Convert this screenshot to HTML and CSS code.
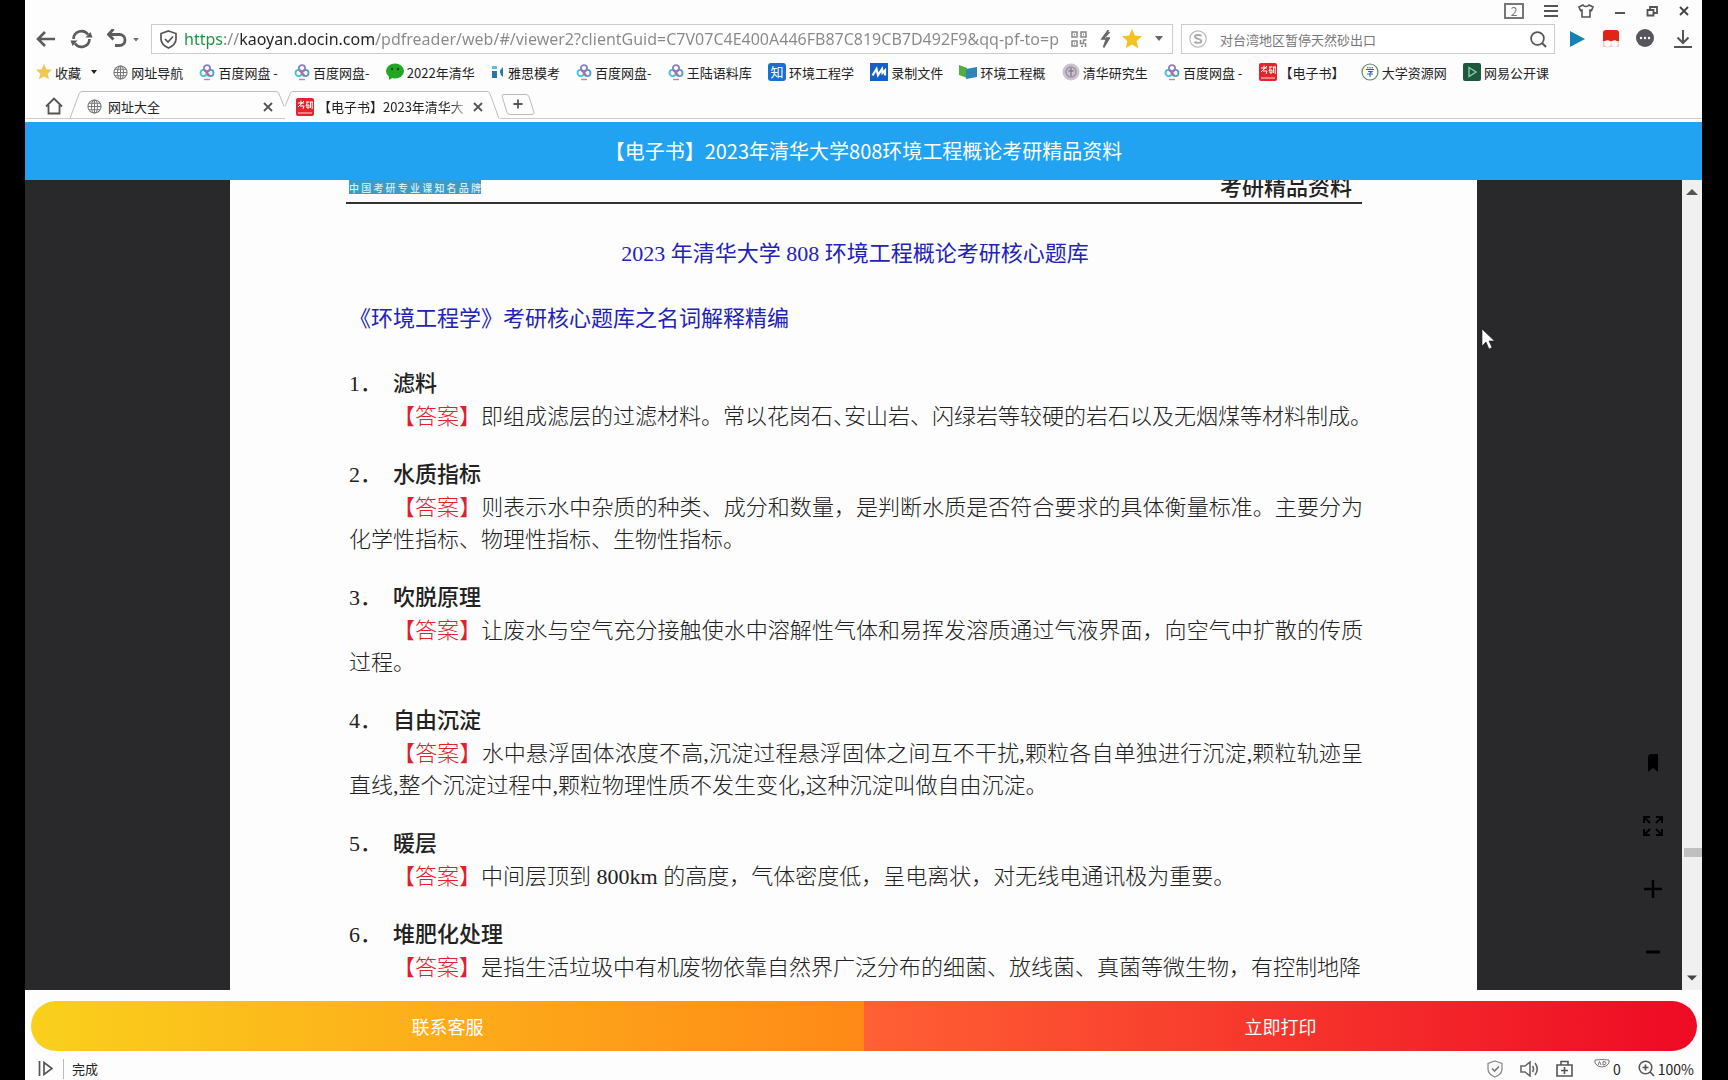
FILE: index.html
```html
<!DOCTYPE html>
<html lang="zh-CN">
<head>
<meta charset="utf-8">
<title>【电子书】2023年清华大学808环境工程概论考研精品资料</title>
<link rel="stylesheet" href="styles.css">
</head>
<body>
<svg class="defs" aria-hidden="true">
  <symbol id="globe" viewBox="0 0 16 16"><g fill="none" stroke="#777" stroke-width="1.1"><circle cx="8" cy="8" r="7"/><ellipse cx="8" cy="8" rx="3.2" ry="7"/><path d="M8 1v14M1 8h14M2.200 4.600h11.600M2.200 11.400h11.600"/></g></symbol>
  <symbol id="pan" viewBox="0 0 16 18"><g fill="none" stroke-width="1.800"><circle cx="4.600" cy="10" r="3.100" stroke="#3cbfe0"/><circle cx="11.400" cy="10" r="3.100" stroke="#4a9fc8"/><circle cx="8" cy="5.200" r="3.100" stroke="#8a7fc0"/><path d="M5.500 7.300 10.500 12.500" stroke="#e2588c"/></g><path d="M5 16.500h6" stroke="#999" stroke-width="1.400"/></symbol>
  <symbol id="ky" viewBox="0 0 18 18"><rect width="18" height="18" rx="2" fill="#e4232b"/><path d="M2 5h6M5 2.500v4M8 3 2 9M4 8h4l-1 3M10 4h3M11.500 4l-1.500 4M11 7h2v3h-2zM13.500 4H17M14.500 4v6M16.200 4v7" stroke="#fff" stroke-width="1" fill="none"/><path d="M2 15h14" stroke="#f6a0a0" stroke-width="1.500"/></symbol>
</svg>
<div class="window">
  <header class="chrome">
    <div class="titlebar">
      <button class="ic count" aria-label="窗口数">2</button>
      <button class="ic" aria-label="菜单"><svg width="14" height="14" viewBox="0 0 14 14"><path d="M0 2h14M0 7h14M0 12h14" stroke="#555" stroke-width="1.800"/></svg></button>
      <button class="ic" aria-label="皮肤"><svg width="16" height="14" viewBox="0 0 16 14"><path d="M5 1 1 3l1.500 3.500L4 6v7h8V6l1.500.5L15 3l-4-2c-1 2-5 2-6 0z" fill="none" stroke="#555" stroke-width="1.600"/></svg></button>
      <button class="ic" aria-label="最小化"><svg width="12" height="14" viewBox="0 0 12 14"><path d="M1 9h10" stroke="#555" stroke-width="2"/></svg></button>
      <button class="ic" aria-label="还原"><svg width="12" height="14" viewBox="0 0 12 14"><path d="M1.500 6h6v5.500h-6zM4 6V3h7v6H8" fill="none" stroke="#555" stroke-width="1.800"/></svg></button>
      <button class="ic" aria-label="关闭"><svg width="12" height="14" viewBox="0 0 12 14"><path d="M2 3l8 8M10 3l-8 8" stroke="#444" stroke-width="1.900"/></svg></button>
    </div>
    <div class="toolbar">
      <div class="nav">
        <button class="ic" aria-label="后退"><svg width="20" height="18" viewBox="0 0 20 18"><path d="M19 9H2M9 2 2 9l7 7" fill="none" stroke="#5c5c5c" stroke-width="2.600"/></svg></button>
        <button class="ic" aria-label="刷新"><svg width="23" height="20" viewBox="0 0 23 20"><path d="M3.500 10a8 8 0 0 1 14.500-4.500M19.500 10A8 8 0 0 1 5 14.500" fill="none" stroke="#5c5c5c" stroke-width="2.600"/><path d="M22.500 8.500h-7l5-5.500zM.5 11.500h7l-5 5.500z" fill="#5c5c5c"/></svg></button>
        <button class="ic" aria-label="恢复"><svg width="34" height="20" viewBox="0 0 34 20"><path d="M2 5.500h10.500a5.500 5.500 0 0 1 0 11H8M6.500 0 1.500 5.500l5 5" fill="none" stroke="#5c5c5c" stroke-width="2.800"/><path d="M26 9h6l-3 3.500z" fill="#777"/></svg></button>
      </div>
      <div class="address">
        <svg width="17" height="19" viewBox="0 0 17 19"><path d="M8.500 1 16 3.500V9c0 4.500-3 7-7.500 9C4 16 1 13.500 1 9V3.500z" fill="none" stroke="#555" stroke-width="1.700"/><path d="M5 9l3 3 5-5.500" fill="none" stroke="#555" stroke-width="1.700"/></svg>
        <input class="url" type="text" aria-label="地址" value="https://kaoyan.docin.com/pdfreader/web/#/viewer2?clientGuid=C7V07C4E400A446FB87C819CB7D492F9&amp;qq-pf-to=p">
        <svg width="16" height="16" viewBox="0 0 16 16"><path d="M1 1h5v5H1zM10 1h5v5h-5zM1 10h5v5H1zM9.500 9v3.500h3V9h3M10 15.200h2M14.500 12v4M3 3.500h1M12 3.500h1M3 12.500h1" fill="none" stroke="#888" stroke-width="1.500"/></svg>
        <svg class="bolt" width="12" height="18" viewBox="0 0 12 18"><path d="M8.500 0 2 9l4.500 0L3.500 17.500M9.500 2 3 9M9.500 7.500 3.500 17.500M6 8.200h4" fill="none" stroke="#666" stroke-width="1.700"/></svg>
        <svg width="20" height="20" viewBox="0 0 20 20"><path d="M10 0l2.900 6.600 7.100.7-5.300 4.800 1.500 7.100L10 15.500l-6.200 3.700 1.500-7.100L0 7.300l7.100-.7z" fill="#f4c320"/></svg>
        <svg class="drop" width="10" height="6" viewBox="0 0 10 6"><path d="M1 0h8L5 5z" fill="#666"/></svg>
      </div>
      <div class="search">
        <svg width="18" height="18" viewBox="0 0 18 18"><circle cx="9" cy="9" r="8.200" fill="none" stroke="#bbb" stroke-width="1.200"/><path d="M12.500 5.800c-2-1.300-6.500-1.200-6.500 1 0 2.500 6.300 1.500 6.300 4.200 0 2.400-4.800 2.300-6.800.9" fill="none" stroke="#aaa" stroke-width="1.900"/></svg>
        <input class="query" type="text" aria-label="搜索" placeholder="对台湾地区暂停天然砂出口">
        <svg width="17" height="17" viewBox="0 0 17 17"><circle cx="7.500" cy="7.500" r="6.400" fill="none" stroke="#555" stroke-width="1.700"/><path d="M12 12l4 4" stroke="#555" stroke-width="2"/></svg>
      </div>
      <div class="extras">
        <button class="ic" aria-label="播放"><svg width="17" height="18" viewBox="0 0 17 18"><path d="M1 1l15 8-15 8z" fill="#1482b4"/></svg></button>
        <button class="ic" aria-label="扩展"><svg width="18" height="18" viewBox="0 0 18 18"><rect x="1" width="16" height="17" rx="3" fill="#e02416"/><path d="M1 11h16v6H1z" fill="#f7c8c4"/><circle cx="5.500" cy="13.500" r="3.200" fill="#fff"/><circle cx="12.500" cy="13.500" r="3.200" fill="#fff"/></svg></button>
        <button class="ic" aria-label="更多"><svg width="18" height="20" viewBox="0 0 18 20"><circle cx="9" cy="9" r="9" fill="#56575c"/><g fill="#fff"><circle cx="5" cy="9" r="1.200"/><circle cx="9" cy="9" r="1.200"/><circle cx="13" cy="9" r="1.200"/></g></svg></button>
        <button class="ic download" aria-label="下载"><svg width="18" height="18" viewBox="0 0 18 18"><path d="M9 0v13M3.500 7.500 9 13l5.500-5.500M0 17h18" fill="none" stroke="#555" stroke-width="2"/></svg></button>
      </div>
    </div>
    <nav class="bookmarks">
      <a href="#"><svg width="16" height="16" viewBox="0 0 20 20"><path d="M10 0l2.900 6.600 7.100.7-5.300 4.800 1.500 7.100L10 15.500l-6.200 3.700 1.500-7.100L0 7.300l7.100-.7z" fill="#f0c850"/></svg>收藏<svg class="caret" width="6" height="6" viewBox="0 0 6 6"><path d="M0 1h6L3 5z" fill="#222"/></svg></a>
      <a href="#"><svg width="15" height="15"><use href="#globe"/></svg>网址导航</a>
      <a href="#"><svg width="16" height="18"><use href="#pan"/></svg>百度网盘 -</a>
      <a href="#"><svg width="16" height="18"><use href="#pan"/></svg>百度网盘-</a>
      <a href="#"><svg width="18" height="18" viewBox="0 0 18 18"><ellipse cx="9" cy="8" rx="9" ry="7.500" fill="#22a722"/><path d="M3 12v5l5-3z" fill="#22a722"/><circle cx="6" cy="6" r="1.200" fill="#0c4d0c"/><circle cx="12" cy="6" r="1.200" fill="#0c4d0c"/></svg>2022年清华</a>
      <a href="#"><svg width="14" height="16" viewBox="0 0 14 16"><path d="M1 2h5v3H1z" fill="#5bbbe0"/><path d="M1 7h5v7H1z" fill="#2477a8"/><path d="M12 3q-6 5 0 10z" fill="#2477a8"/></svg>雅思模考</a>
      <a href="#"><svg width="16" height="18"><use href="#pan"/></svg>百度网盘-</a>
      <a href="#"><svg width="16" height="18"><use href="#pan"/></svg>王陆语料库</a>
      <a href="#"><span class="zhi">知</span>环境工程学</a>
      <a href="#"><svg width="18" height="18" viewBox="0 0 18 18"><rect width="18" height="18" fill="#1260c8"/><path d="M2.500 12.500 6.500 6l1.500 6 4-6 .5 4 2.500-2.500v5" fill="none" stroke="#fff" stroke-width="2.200"/></svg>录制文件</a>
      <a href="#"><svg width="18" height="16" viewBox="0 0 18 16"><path d="M0 1l8 3v10l-8-3z" fill="#51ad3c"/><path d="M7 5l11-2v10L7 15z" fill="#2f86b4"/></svg>环境工程概</a>
      <a href="#"><svg width="18" height="18" viewBox="0 0 18 18"><circle cx="9" cy="9" r="8.500" fill="#c9c2cd"/><circle cx="9" cy="9" r="5" fill="none" stroke="#9d91a4" stroke-width="1.500"/><path d="M9 5v8M6.500 8h5" stroke="#85778f" stroke-width="1.300"/></svg>清华研究生</a>
      <a href="#"><svg width="16" height="18"><use href="#pan"/></svg>百度网盘 -</a>
      <a href="#"><svg width="18" height="18"><use href="#ky"/></svg>【电子书】</a>
      <a href="#"><svg width="18" height="18" viewBox="0 0 18 18"><circle cx="9" cy="9" r="8" fill="#fff" stroke="#4f8f68" stroke-width="1.200"/><path d="M5 6.500h8M6.500 4l.7 1.500M9 4v1.500M11.500 4l-.7 1.500M7 8.500h4L9 10v4M6 11h6" fill="none" stroke="#3566b8" stroke-width="1.100"/></svg>大学资源网</a>
      <a href="#"><svg width="18" height="18" viewBox="0 0 18 18"><rect width="18" height="18" rx="2" fill="#20583f"/><path d="M6 4.500l7 4.500-7 4.500z" fill="none" stroke="#8fd0a8" stroke-width="1.300"/></svg>网易公开课</a>
    </nav>
    <div class="tabs">
      <button class="ic home" aria-label="主页"><svg width="18" height="18" viewBox="0 0 18 18"><path d="M1 9.500 9 1.500l8 8M3.500 8v8.500h11V8" fill="none" stroke="#555" stroke-width="1.800"/></svg></button>
      <div class="tab">
        <svg class="shape" viewBox="0 0 216 29" preserveAspectRatio="none"><path d="M0 28.500 9 3q1-2.500 3-2.500H207q2 0 3 2.500l5 13" /></svg>
        <svg width="15" height="15"><use href="#globe"/></svg>
        <span class="label">网址大全</span>
        <button class="ic" aria-label="关闭标签"><svg width="10" height="10" viewBox="0 0 10 10"><path d="M1 1l8 8M9 1 1 9" stroke="#555" stroke-width="1.800"/></svg></button>
      </div>
      <div class="tab active">
        <svg class="shape" viewBox="0 0 216 29" preserveAspectRatio="none"><path d="M0 16 5 3q1-2.500 3-2.500H203q2 0 3 2.500l9 25.500"/></svg>
        <svg width="18" height="18"><use href="#ky"/></svg>
        <span class="label">【电子书】2023年清华大</span>
        <button class="ic" aria-label="关闭标签"><svg width="10" height="10" viewBox="0 0 10 10"><path d="M1 1l8 8M9 1 1 9" stroke="#555" stroke-width="1.800"/></svg></button>
      </div>
      <button class="ic plus" aria-label="新建标签"><svg width="34" height="21" viewBox="0 0 34 21"><path d="M1 2q0-1.500 2-1.500h22q2 0 3 2l5 16q0 2-2 2H9q-2 0-3-2z" fill="none" stroke="#bbb"/><path d="M17 5.500v9M12.500 10h9" stroke="#555" stroke-width="1.800"/></svg></button>
    </div>
  </header>

  <h1 class="banner">【电子书】2023年清华大学808环境工程概论考研精品资料</h1>

  <main class="viewer">
    <article class="page">
      <div class="pagehead"><span class="brand">中国考研专业课知名品牌</span><span class="headtext">考研精品资料</span></div>
      <h2 class="doctitle">2023 年清华大学 808 环境工程概论考研核心题库</h2>
      <h3 class="subtitle">《环境工程学》考研核心题库之名词解释精编</h3>
      <section class="item"><h4><span>1．</span>滤料</h4><p><b>【答案】</b>即组成滤层的过滤材料。常以花岗石<span class="half">、</span>安山岩、闪绿岩等较硬的岩石以及无烟煤等材料制成<span class="half">。</span></p></section>
      <section class="item"><h4><span>2．</span>水质指标</h4><p><b>【答案】</b>则表示水中杂质的种类、成分和数量，是判断水质是否符合要求的具体衡量标准。主要分为化学性指标、物理性指标、生物性指标。</p></section>
      <section class="item"><h4><span>3．</span>吹脱原理</h4><p><b>【答案】</b>让废水与空气充分接触使水中溶解性气体和易挥发溶质通过气液界面，向空气中扩散的传质过程。</p></section>
      <section class="item"><h4><span>4．</span>自由沉淀</h4><p><b>【答案】</b>水中悬浮固体浓度不高,沉淀过程悬浮固体之间互不干扰,颗粒各自单独进行沉淀,颗粒轨迹呈直线,整个沉淀过程中,颗粒物理性质不发生变化,这种沉淀叫做自由沉淀。</p></section>
      <section class="item"><h4><span>5．</span>暖层</h4><p><b>【答案】</b>中间层顶到 800km 的高度，气体密度低，呈电离状，对无线电通讯极为重要。</p></section>
      <section class="item"><h4><span>6．</span>堆肥化处理</h4><p><b>【答案】</b>是指生活垃圾中有机废物依靠自然界广泛分布的细菌、放线菌、真菌等微生物，有控制地降</p></section>
    </article>
    <div class="scrollbar">
      <svg width="12" height="6" viewBox="0 0 12 6"><path d="M0 6 6 0l6 6z" fill="#555"/></svg>
      <div class="track"><div class="thumb"></div></div>
      <svg width="10" height="6" viewBox="0 0 12 6"><path d="M0 0h12L6 6z" fill="#444"/></svg>
    </div>
    <div class="float">
      <button class="ic" aria-label="书签"><svg width="12" height="20" viewBox="0 0 12 20"><path d="M1 3l2-2h8v18l-5-4-5 4z"/></svg></button>
      <button class="ic" aria-label="全屏"><svg width="20" height="20" viewBox="0 0 20 20"><path d="M1 7V1h6M1 1l6 6M13 1h6v6M19 1l-6 6M1 13v6h6M1 19l6-6M13 19h6v-6M19 19l-6-6" fill="none" stroke="#000" stroke-width="2"/></svg></button>
      <button class="ic" aria-label="放大"><svg width="18" height="18" viewBox="0 0 18 18"><path d="M9 0v18M0 9h18" stroke="#000" stroke-width="2.400"/></svg></button>
      <button class="ic" aria-label="缩小"><svg width="16" height="18" viewBox="0 0 16 18"><path d="M1 9h14" stroke="#000" stroke-width="3"/></svg></button>
    </div>
    <svg class="cursor" width="14" height="22" viewBox="0 0 14 22"><path d="M1 1v17l4-4 3 7 3-1.500-3-6.500h5.500z" fill="#fff" stroke="#222" stroke-width=".6"/></svg>
  </main>

  <div class="actions">
    <button class="service">联系客服</button>
    <button class="print">立即打印</button>
  </div>

  <footer class="status">
    <button class="ic" aria-label="侧栏"><svg width="15" height="15" viewBox="0 0 15 15"><path d="M1.500 0v15M6 1.500v12l8-6z" fill="none" stroke="#555" stroke-width="1.700"/></svg></button>
    <span class="done">完成</span>
    <svg width="16" height="18" viewBox="0 0 16 18"><path d="M8 1l7 2.500V9c0 4-3 6.500-7 8-4-1.500-7-4-7-8V3.500z" fill="none" stroke="#888" stroke-width="1.200"/><path d="M5 8.500l2.500 2.500L12 6.500" fill="none" stroke="#777" stroke-width="1.600"/></svg>
    <svg width="19" height="16" viewBox="0 0 19 16"><path d="M1 5h4l5-4v14l-5-4H1zM12.500 5q2 3 0 6M15 2q4.500 6 0 12" fill="none" stroke="#666" stroke-width="1.600"/></svg>
    <svg width="17" height="17" viewBox="0 0 17 17"><path d="M1 5h15v11H1zM5 5V1.500h7V5M8.500 7v7M5 10.500h7" fill="none" stroke="#555" stroke-width="1.600"/></svg>
    <span class="ads"><svg width="16" height="9" viewBox="0 0 16 9"><path d="M1 1q7-1 14 0v3q-2 4-7 4T1 4zM4 6l1.500-3.500L7 6M9 2.500V6q3 0 3-1.800T9 2.500" fill="none" stroke="#777"/></svg>0</span>
    <span class="zoom"><svg width="17" height="17" viewBox="0 0 17 17"><path d="M12 12l4 4M7.500 4.500v6M4.500 7.500h6" stroke="#555" stroke-width="1.700"/><circle cx="7.500" cy="7.500" r="6.300" fill="none" stroke="#555" stroke-width="1.500"/></svg>100%</span>
  </footer>
</div>
</body>
</html>
```
FILE: styles.css
```css
* { box-sizing: border-box; }
body {
  margin: 0;
  padding: 0 26px 0 25px;
  background: #000;
  color: #222;
  font-family: "Noto Sans CJK SC", sans-serif;
  font-size: 13px;
}
svg { display: block; flex: none; }
button, input { font: inherit; color: inherit; border: 0; padding: 0; background: none; }
input { outline: 0; min-width: 0; }
.defs { position: absolute; width: 0; height: 0; }
.ic { display: flex; align-items: center; justify-content: center; flex: none; }
.window { display: flex; flex-direction: column; height: 100vh; background: #fdfdfd; }

/* browser chrome */
.titlebar { display: flex; justify-content: flex-end; align-items: center; height: 22px; gap: 20px; padding-right: 12px; }
.count { width: 20px; height: 16px; border: 2px solid #777; color: #777; font-size: 12px; line-height: 12px; }
.toolbar { display: flex; align-items: center; height: 34px; }
.nav { display: flex; align-items: center; gap: 14px; width: 126px; padding-left: 11px; }
.address, .search { display: flex; align-items: center; height: 30px; border: 1px solid #ccc; background: #fff; }
.address { flex: 1; min-width: 0; padding: 0 8px; }
.url {
  flex: 1;
  margin: 0 5px 0 7px;
  font-family: "Noto Sans", sans-serif;
  font-size: 16px;
  line-height: 24px;
  color: transparent;
  background: linear-gradient(90deg, #16913a 0 39px, #888 39px 55px, #222 55px 192px, #888 192px);
  -webkit-background-clip: text;
  background-clip: text;
}
.bolt { margin: 0 10px 0 13px; }
.drop { margin-left: 12px; }
.search { width: 374px; margin-left: 8px; padding: 0 7px; }
.query { flex: 1; padding-left: 13px; }
.query::placeholder { color: #777; opacity: 1; }
.extras { display: flex; align-items: center; gap: 16px; width: 147px; padding: 0 10px 0 14px; }
.download { margin-left: auto; }
.bookmarks { display: flex; align-items: center; justify-content: space-between; height: 32px; padding: 0 153px 0 11px; }
.bookmarks a { display: flex; align-items: center; gap: 3px; color: #222; text-decoration: none; white-space: nowrap; }
.caret { margin-left: 7px; }
.zhi { width: 18px; height: 18px; border-radius: 3px; background: #1a6fd0; color: #fff; line-height: 18px; text-align: center; }
.tabs { display: flex; align-items: flex-start; height: 34px; padding-top: 3px; border-bottom: 3px solid #fdfdfd; box-shadow: inset 0 -1px #ccc; }
.home { width: 45px; height: 30px; padding-left: 12px; }
.tab { position: relative; display: flex; align-items: center; width: 215px; height: 28px; padding: 3px 12px 0 17px; gap: 6px; }
.tab.active { padding: 3px 17px 0 11px; gap: 4px; box-shadow: inset 0 -1px #fdfdfd; }
.shape { position: absolute; inset: 0; width: 100%; height: 100%; }
.shape path { fill: none; stroke: #bbb; }
.label { flex: 1; overflow: hidden; white-space: nowrap; }
.active .label { -webkit-mask: linear-gradient(90deg, #000 88%, transparent); mask: linear-gradient(90deg, #000 88%, transparent); }
.plus { margin: 3px 0 0 1px; }

.banner { flex: none; margin: 0; background: #22a3f1; color: #fff; font-size: 20px; font-weight: 400; line-height: 58px; text-align: center; }

/* document viewer */
.viewer { position: relative; display: flex; flex: 1; min-height: 0; overflow: hidden; background: #29292b; padding-left: 205px; }
.page { flex: 1; margin-right: 205px; padding: 0 116px 0 119px; background: #fdfdfd; font-family: "Liberation Serif", "Noto Sans CJK SC", serif; font-size: 22px; font-weight: 300; }
.pagehead { display: flex; justify-content: space-between; align-items: flex-end; height: 24px; margin: 0 -1px 0 -3px; padding: 0 10px 0 3px; border-bottom: 2px solid #333; font-weight: 500; line-height: 29px; }
.brand { width: 132px; height: 30px; margin-bottom: 8px; padding-top: 18px; background: #3a9cc8; color: #d5f0fa; font-family: "Noto Sans CJK SC", sans-serif; font-size: 10px; line-height: 12px; text-align: justify; text-align-last: justify; }
.doctitle, .subtitle { margin: 0; color: #2222b8; font-size: 22px; font-weight: 400; line-height: 33px; }
.doctitle { margin-top: 33px; text-align: center; }
.subtitle { margin: 32px 0; }
.item { margin-bottom: 25px; line-height: 32px; }
.item h4 { display: flex; margin: 0; font-size: 22px; font-weight: 500; line-height: 34px; }
.item h4 span { width: 44px; font-weight: 400; }
.item p { margin: 0 -2px 0 0; text-indent: 44px; text-align: justify; color: #222; }
.item b { color: #e0202c; font-weight: 300; }
.half { font-feature-settings: "halt"; }
.scrollbar { display: flex; flex-direction: column; align-items: center; width: 20px; padding: 9px 0; background: #f0f0f0; }
.track { display: flex; align-self: stretch; flex: 1; padding: 0 0 0 2px; }
.thumb { flex: 1; height: 9px; margin-top: 653px; background: #c0c0c0; }
.float { position: absolute; right: 29px; bottom: 18px; display: flex; flex-direction: column; gap: 23px; }
.float .ic { width: 40px; height: 40px; }
.cursor { position: absolute; right: 207px; top: 148px; }

.actions { display: flex; flex: none; margin: 11px 5px 0 6px; height: 50px; border-radius: 25px; overflow: hidden; }
.actions button { flex: 1; color: #fff; font-size: 18px; }
.service { background: linear-gradient(90deg, #fad01c, #ff8917); }
.print { background: linear-gradient(90deg, #ff6034, #ee0a24); }

.status { display: flex; align-items: center; flex: none; height: 29px; padding: 6px 8px 0 13px; gap: 17px; font-size: 14px; line-height: 20px; }
.status .ic { margin-right: -7px; }
.done { flex: 1; padding-left: 8px; border-left: 1px solid #bbb; font-size: 13px; }
.ads { display: flex; gap: 3px; margin-left: 4px; }
.zoom { display: flex; align-items: center; gap: 3px; }
```
